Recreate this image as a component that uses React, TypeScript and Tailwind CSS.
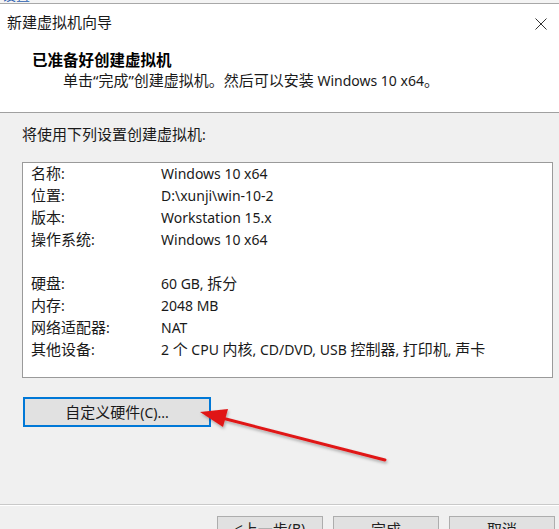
import React from 'react';

const FONT = { fontFamily: '"Noto Sans", "Noto Sans CJK SC", sans-serif' };

// CJK glyphs in the dialog font sit a bit wider than the latin ones
const CJK = /([\u3000-\u303f\u4e00-\u9fff\uff00-\uffef“”]+)/;
const Mixed = ({ text }: { text: string }) => (
  <>
    {text.split(CJK).map((part, i) =>
      CJK.test(part) ? (
        <span key={i} className="text-[15px]">{part}</span>
      ) : (
        <React.Fragment key={i}>{part}</React.Fragment>
      )
    )}
  </>
);

const ROWS: Array<[string, string] | null> = [
  ['名称:', 'Windows 10 x64'],
  ['位置:', 'D:\\xunji\\win-10-2'],
  ['版本:', 'Workstation 15.x'],
  ['操作系统:', 'Windows 10 x64'],
  null,
  ['硬盘:', '60 GB, 拆分'],
  ['内存:', '2048 MB'],
  ['网络适配器:', 'NAT'],
  ['其他设备:', '2 个 CPU 内核, CD/DVD, USB 控制器, 打印机, 声卡'],
];

const FooterButton = ({ children }: { children: string }) => (
  <div className="w-[106px] h-[26px] flex-shrink-0 bg-[#e1e1e1] border border-[#adadad] flex justify-center pt-[2px] text-[14px] leading-[20px] text-[#222]">
    <Mixed text={children} />
  </div>
);

const App = () => {
  return (
    <div
      className="relative w-[559px] h-[529px] overflow-hidden bg-[#f0f0f0] text-[#1a1a1a]"
      style={FONT}
    >
      {/* cut-off strip of the window behind */}
      <div className="h-[4px] bg-[#f4f4f4] border-b border-[#a8a8a8] overflow-hidden">
        <div className="-mt-[13px] pl-[2px] text-[14px] leading-[16px] text-[#2b5fb0]">设置</div>
      </div>

      {/* white header */}
      <div className="h-[109px] bg-white border-b border-[#a0a0a0]">
        <div className="flex items-center justify-between pl-[7px] pr-[12px] pt-[7px]">
          <span className="text-[14px] leading-[22px]"><Mixed text="新建虚拟机向导" /></span>
          <svg width="12" height="12" viewBox="0 0 12 12" className="mt-[2px]">
            <path d="M0.5 0.5 L11.5 11.5 M11.5 0.5 L0.5 11.5" stroke="#333" strokeWidth="1" />
          </svg>
        </div>
        <div className="pl-[32px] mt-[16px] text-[15.5px] leading-[20px] font-bold text-black">
          已准备好创建虚拟机
        </div>
        <div className="pl-[63px] text-[14px] leading-[20px]">
          <Mixed text="单击“完成”创建虚拟机。然后可以安装 Windows 10 x64。" />
        </div>
      </div>

      {/* body */}
      <div className="h-[391px] px-[22px] pt-[10px]">
        <div className="text-[14px] leading-[22px]"><Mixed text="将使用下列设置创建虚拟机:" /></div>
        <div className="mt-[16px] w-[531px] h-[216px] bg-white border border-[#9a9a9a] text-[14px]">
          {ROWS.map((row, i) =>
            row ? (
              <div key={i} className="flex h-[22px] items-center pb-[2px]">
                <span className="w-[138px] pl-[8px] flex-shrink-0"><Mixed text={row[0]} /></span>
                <span className="whitespace-nowrap"><Mixed text={row[1]} /></span>
              </div>
            ) : (
              <div key={i} className="h-[22px]" />
            )
          )}
        </div>
        <div className="mt-[19px] ml-[1px] w-[188px] h-[30px] bg-[#e1e1e1] border-2 border-[#0078d7] flex items-center justify-center text-[14px]">
          <Mixed text="自定义硬件(C)..." />
        </div>
      </div>

      {/* footer */}
      <div className="h-[1px] bg-[#c9c9c9]" />
      <div className="h-[1px] bg-white" />
      <div className="flex justify-end gap-[10px] pr-[4px] pt-[10px]">
        <FooterButton>{'< 上一步(B)'}</FooterButton>
        <FooterButton>完成</FooterButton>
        <FooterButton>取消</FooterButton>
      </div>

      {/* red annotation arrow */}
      <svg className="absolute inset-0 pointer-events-none" width="559" height="529" viewBox="0 0 559 529">
        <defs>
          <filter id="sh" x="-10%" y="-10%" width="120%" height="130%">
            <feDropShadow dx="1" dy="2" stdDeviation="1.5" floodColor="#000" floodOpacity="0.3" />
          </filter>
        </defs>
        <g filter="url(#sh)">
          <line x1="385" y1="460" x2="222" y2="418" stroke="#e01818" strokeWidth="3" strokeLinecap="round" />
          <polygon points="200,412 228,409 223,427" fill="#e01818" />
        </g>
      </svg>
    </div>
  );
};

export default App;
